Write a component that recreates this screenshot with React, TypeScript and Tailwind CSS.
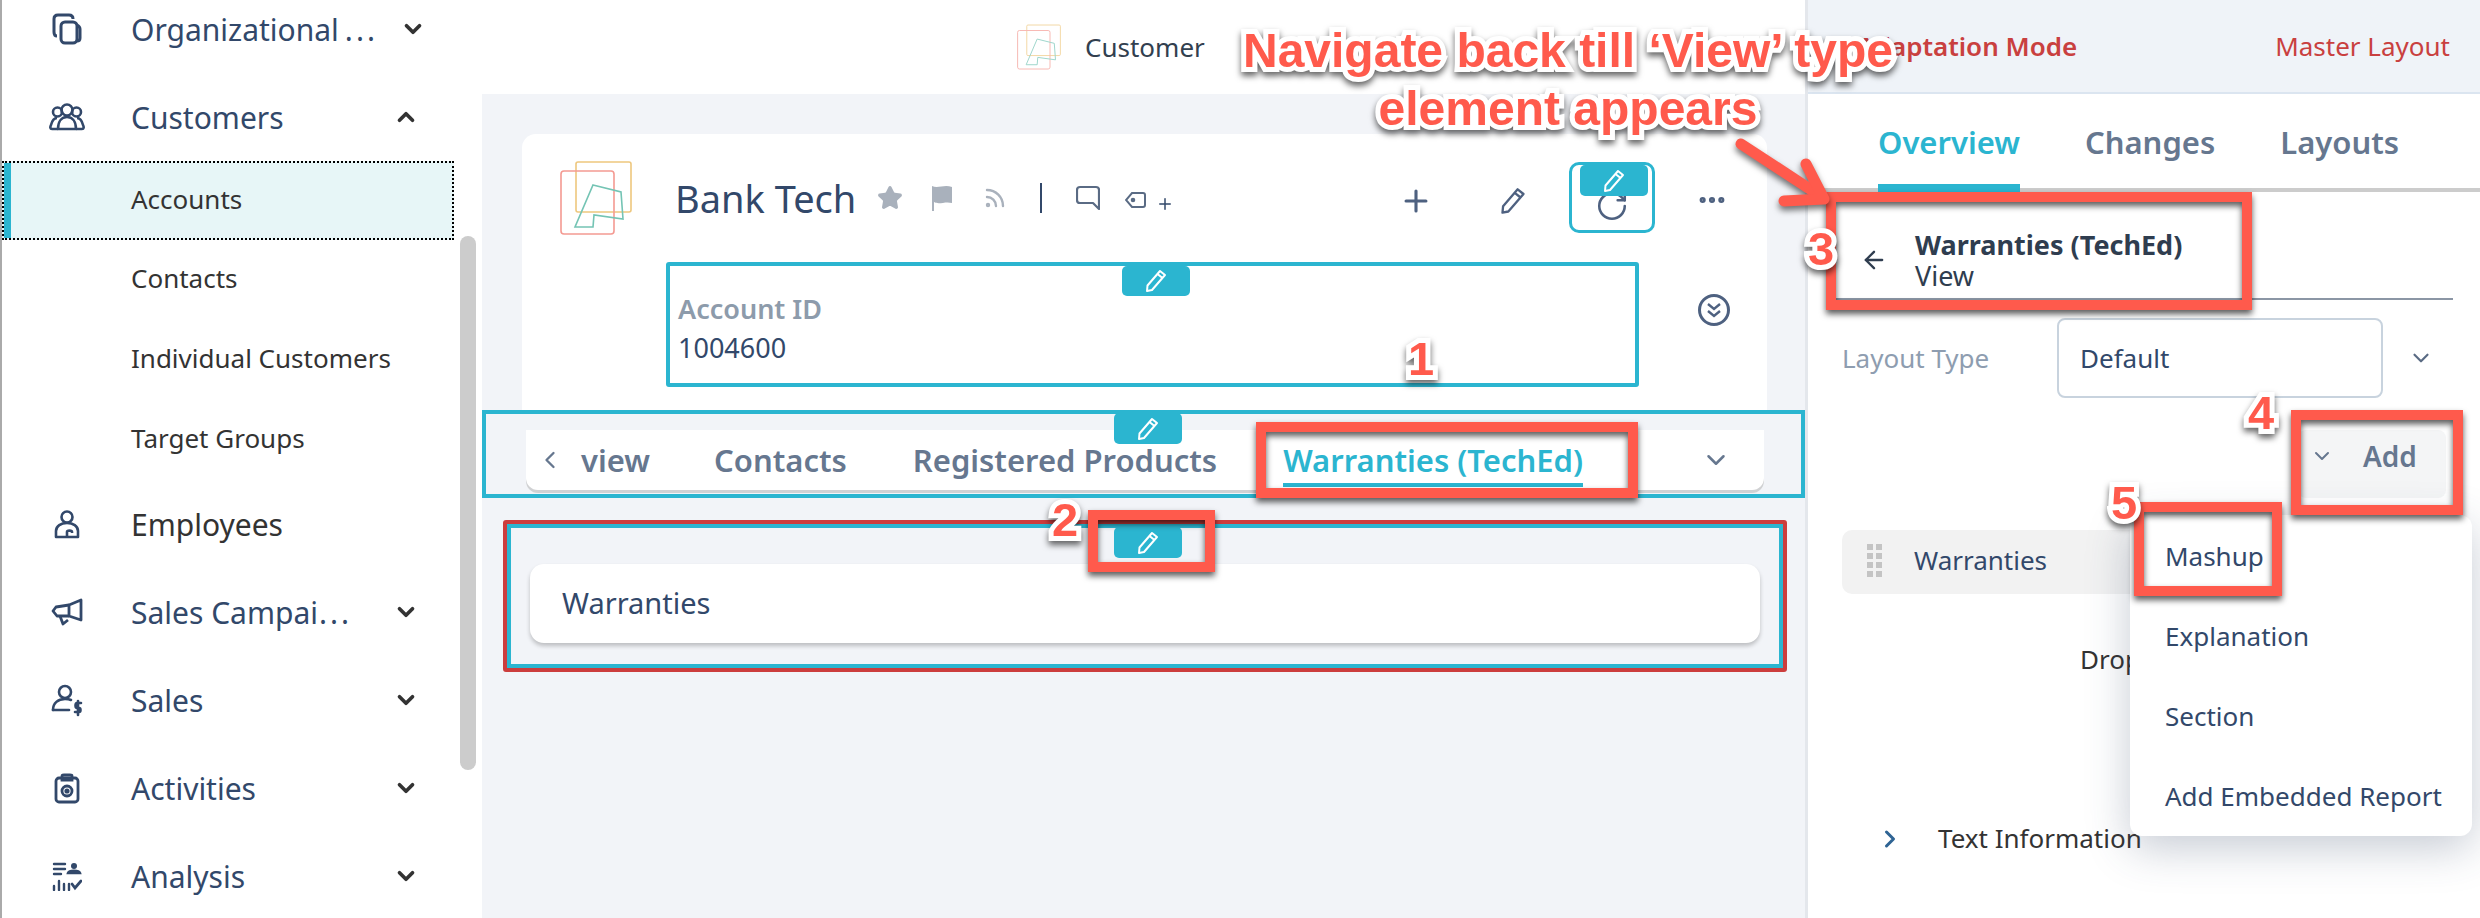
import { ArrowLeft, ChevronDown, ChevronLeft, ChevronRight, ChevronUp, MoreHorizontal, Plus, RotateCw, Rss, Star } from 'lucide-react';

const navy = '#32486a';

function OrgIcon() {
  return (
    <svg width="30" height="32" viewBox="0 0 30 32" fill="none" stroke={navy} strokeWidth="3">
      <rect x="9" y="9" width="16" height="21" rx="4" />
      <path d="M5 23 C3 23 2 21 2 19 V6 C2 3 4 2 6 2 H17 C20 2 21 4 21 6" />
      <path d="M25 12 C27 13 28 14 28 16 V25 C28 27 27 28 25 28" />
    </svg>
  );
}

function CustomersIcon() {
  return (
    <svg width="36" height="28" viewBox="0 0 36 28" fill="none" stroke={navy} strokeWidth="2.6" strokeLinejoin="round">
      <circle cx="18" cy="7" r="5.5" />
      <circle cx="8.5" cy="9" r="4.5" />
      <circle cx="27.5" cy="9" r="4.5" />
      <path d="M9 26 C9 18 13 14 18 14 C23 14 27 18 27 26 Z" />
      <path d="M9 26 H3 C1 26 1 24 2 22 C3 18 5 15 8 15" />
      <path d="M27 26 H33 C35 26 35 24 34 22 C33 18 31 15 28 15" />
    </svg>
  );
}

function EmployeesIcon() {
  return (
    <svg width="26" height="29" viewBox="0 0 26 29" fill="none" stroke={navy} strokeWidth="2.6" strokeLinejoin="round">
      <circle cx="13" cy="7" r="5.5" />
      <path d="M2 27 V21 C2 16 7 13 13 13 C19 13 24 16 24 21 V27 Z" />
      <path d="M13 27 V22 C13 20 18 20 18 22 V23" />
    </svg>
  );
}

function CampaignIcon() {
  return (
    <svg width="32" height="28" viewBox="0 0 32 28" fill="none" stroke={navy} strokeWidth="2.8" strokeLinejoin="round">
      <path d="M30 2 V22 L18 18 V7 Z" />
      <path d="M18 7 L5 9 L2 13 L6 18 L18 18" />
      <path d="M9 18 L12 26 L17 22" />
    </svg>
  );
}

function SalesIcon() {
  return (
    <svg width="32" height="33" viewBox="0 0 32 33" fill="none" stroke={navy} strokeWidth="2.6" strokeLinejoin="round" strokeLinecap="round">
      <circle cx="14" cy="8" r="6" />
      <path d="M2 26 C2 19 7 15 14 15 C16 15 18 15 20 16" />
      <path d="M2 26 H18" />
      <path d="M30 19 H26 C24 19 24 24 26 24 H28 C30 24 30 28 28 28 H24" />
      <path d="M27 17 V31" />
    </svg>
  );
}

function ActivitiesIcon() {
  return (
    <svg width="26" height="31" viewBox="0 0 26 31" fill="none" stroke={navy} strokeWidth="2.8">
      <rect x="2" y="5" width="22" height="24" rx="3" />
      <path d="M8 5 V3 C8 2 9 2 10 2 H16 C17 2 18 2 18 3 V7 H8 Z" />
      <circle cx="13" cy="18" r="5" />
      <circle cx="13" cy="18" r="1.2" fill={navy} />
    </svg>
  );
}

function AnalysisIcon() {
  return (
    <svg width="30" height="29" viewBox="0 0 30 29" fill="none" stroke={navy} strokeWidth="2.4" strokeLinecap="round">
      <path d="M2 2 H13 M2 7 H13 M2 12 H9" />
      <circle cx="22" cy="4" r="3" fill={navy} stroke="none" />
      <path d="M16 11 C17 8 27 8 28 11 Z" fill={navy} />
      <path d="M2 24 V28 M7 19 V28 M12 22 V28 M17 22 V28" />
      <path d="M20 22 L23 26 L29 19" strokeWidth="2.8" />
    </svg>
  );
}

function Logo({ className }: { className: string }) {
  return (
    <svg className={className} viewBox="0 0 72 74" fill="none" strokeWidth="1.6">
      <rect x="16" y="1" width="55" height="50" rx="2" stroke="#eec77e" />
      <rect x="1" y="10" width="53" height="63" rx="3" stroke="#f49a92" />
      <path d="M33 24 L61 31 L63 58 L34 54 L33 66 L15 66 Z" stroke="#74c4b4" />
    </svg>
  );
}

function PencilIcon({ className }: { className: string }) {
  return (
    <svg className={className} viewBox="0 0 24 24" fill="none" stroke="currentColor" strokeWidth="2" strokeLinejoin="round">
      <path d="M16 2 L21 6 L8 21 L3 22 L3.5 16.5 Z" />
      <path d="M13.5 5 L18.5 9" />
    </svg>
  );
}

function EditTab({ className }: { className: string }) {
  return (
    <div className={`absolute flex items-center justify-center rounded-[5px] bg-[#2bb5d0] text-white ${className}`}>
      <PencilIcon className="h-[24px] w-[24px]" />
    </div>
  );
}

function Box({ className }: { className: string }) {
  return <div className={`absolute z-30 border-[10px] border-[#ff5a4c] [filter:drop-shadow(0_4px_3px_rgba(0,0,0,0.65))] ${className}`} />;
}

function Num({ n, className }: { n: string; className: string }) {
  return (
    <div className={`absolute z-40 font-['Liberation_Sans',sans-serif] text-[47px] leading-[46px] font-bold text-[#ff5a4c] [-webkit-text-stroke:10px_white] [paint-order:stroke_fill] [filter:drop-shadow(0_4px_3px_rgba(0,0,0,0.6))] ${className}`}>
      {n}
    </div>
  );
}

function NavRow({ icon, label, dots, open, dark, far }: { icon: React.ReactNode; label: string; dots?: boolean; open?: boolean; dark?: boolean; far?: boolean }) {
  return (
    <div className={`flex h-[88px] items-center pl-[46px] ${far ? 'pr-[56px]' : 'pr-[63px]'}`}>
      <div className="flex w-[37px] justify-center">{icon}</div>
      <span className={`ml-[46px] text-[30px] ${dark ? 'text-[#333]' : 'text-[#32486a]'}`}>
        {label}
        {dots ? <span className={far ? 'ml-[6px] tracking-[3px]' : 'ml-[1px] tracking-[3px]'}>...</span> : null}
      </span>
      {open === undefined ? null : open ? (
        <ChevronUp className="ml-auto text-[#333]" size={26} strokeWidth={3.4} />
      ) : (
        <ChevronDown className="ml-auto text-[#333]" size={26} strokeWidth={3.4} />
      )}
    </div>
  );
}

function SubRow({ label }: { label: string }) {
  return <div className="flex h-[80px] items-center pb-[3px] pl-[129px] text-[26px] text-[#333]">{label}</div>;
}

function Sidebar() {
  return (
    <aside className="relative h-full w-[482px] shrink-0 border-l-2 border-[#aaa] bg-white">
      <div className="-mt-[15px]">
        <NavRow icon={<OrgIcon />} label="Organizational" dots open={false} far />
        <NavRow icon={<CustomersIcon />} label="Customers" open />
        <div className="flex h-[79px] w-[452px] items-center border-2 border-dotted border-black bg-[#e7f6f7] text-[26px] text-[#333]">
          <div className="h-full w-[7px] bg-[#2bb5d0]" />
          <span className="mb-[3px] ml-[120px]">Accounts</span>
        </div>
        <SubRow label="Contacts" />
        <SubRow label="Individual Customers" />
        <SubRow label="Target Groups" />
        <NavRow icon={<EmployeesIcon />} label="Employees" dark />
        <NavRow icon={<CampaignIcon />} label="Sales Campai" dots open={false} />
        <NavRow icon={<SalesIcon />} label="Sales" open={false} />
        <NavRow icon={<ActivitiesIcon />} label="Activities" open={false} />
        <NavRow icon={<AnalysisIcon />} label="Analysis" open={false} />
      </div>
      <div className="absolute top-[236px] left-[458px] h-[534px] w-[16px] rounded-[8px] bg-[#ccc]" />
    </aside>
  );
}

function Center() {
  return (
    <main className="flex h-full w-[1323px] shrink-0 flex-col bg-[#f2f4f8]">
      <div className="flex h-[94px] shrink-0 items-center bg-white pl-[535px]">
        <Logo className="h-[46px] w-[44px] opacity-70" />
        <span className="ml-[24px] text-[26px] text-[#32404f]">Customer</span>
      </div>

      <section className="relative mt-[40px] mr-[38px] ml-[40px] h-[276px] shrink-0 rounded-t-[14px] bg-white">
        <div className="flex h-[128px] items-center pl-[38px]">
          <Logo className="h-[74px] w-[72px]" />
          <h1 className="ml-[43px] text-[38px] text-[#32486a]">Bank Tech</h1>
          <Star className="ml-[21px] text-[#a9b1bc]" size={26} fill="#a9b1bc" />
          <svg className="ml-[28px]" width="22" height="28" viewBox="0 0 22 28" fill="#a9b1bc">
            <path d="M1 2 C7 5 13 0 21 3 V19 C14 17 8 21 3 18 V27 H1 Z" />
          </svg>
          <Rss className="ml-[30px] text-[#a9b1bc]" size={24} strokeWidth={2.4} />
          <div className="ml-[33px] h-[30px] w-[2px] bg-[#32486a]" />
          <svg className="ml-[34px]" width="24" height="26" viewBox="0 0 24 26" fill="none" stroke="#5a6b84" strokeWidth="2.2" strokeLinejoin="round">
            <path d="M4 2 H20 C22 2 23 3 23 5 V24 L17 18 H4 C2 18 1 17 1 15 V5 C1 3 2 2 4 2 Z" />
          </svg>
          <svg className="mt-[4px] ml-[25px]" width="21" height="16" viewBox="0 0 21 16" fill="none" stroke="#5a6b84" strokeWidth="2">
            <path d="M7 1 H18 C19 1 20 2 20 3 V13 C20 14 19 15 18 15 H7 L1 8 Z" />
            <circle cx="8" cy="8" r="1.3" fill="#5a6b84" />
          </svg>
          <Plus className="mt-[12px] ml-[10px] text-[#32486a]" size={18} />
          <Plus className="absolute top-[50px] left-[877px] text-[#4e6180]" size={34} strokeWidth={2.2} />
          <PencilIcon className="absolute top-[53px] left-[977px] h-[28px] w-[28px] text-[#4e6180]" />
          <div className="absolute top-[28px] left-[1047px] flex h-[71px] w-[86px] items-center justify-center rounded-[10px] border-[3px] border-[#2bb5d0]">
            <RotateCw className="mt-[16px] text-[#4e6180]" size={34} strokeWidth={1.8} />
          </div>
          <EditTab className="top-[31px] left-[1058px] h-[31px] w-[68px]" />
          <MoreHorizontal className="absolute top-[50px] left-[1174px] text-[#4e6180]" size={32} strokeWidth={2.6} />
        </div>

        <div className="relative ml-[144px] flex h-[125px] w-[973px] flex-col justify-center rounded-[3px] border-[4px] border-[#2bb5d0] pt-[7px] pl-[8px]">
          <span className="text-[27px] leading-[39px] font-semibold text-[#8d9bab]">Account ID</span>
          <span className="text-[27px] leading-[39px] text-[#32486a]">1004600</span>
          <EditTab className="top-[0px] left-[452px] h-[30px] w-[68px]" />
        </div>
        <div className="absolute top-[160px] left-[1176px] flex h-[32px] w-[32px] items-center justify-center rounded-full border-[3px] border-[#4e6180] text-[#4e6180]">
          <svg width="18" height="18" viewBox="0 0 18 18" fill="none" stroke="currentColor" strokeWidth="2.4">
            <path d="M3 3 L9 8 L15 3 M3 10 L9 15 L15 10" />
          </svg>
        </div>
      </section>

      <section className="relative h-[88px] shrink-0 border-[4px] border-[#2bb5d0] pt-[16px] pl-[40px]">
        <div className="flex h-[60px] w-[1238px] items-center rounded-b-[12px] bg-white text-[31px] font-semibold text-[#66778f] shadow-[0_3px_0_#d0d1d3]">
          <ChevronLeft className="ml-[10px]" size={28} strokeWidth={2} />
          <span className="ml-[17px]">view</span>
          <span className="ml-[64px]">Contacts</span>
          <span className="ml-[66px]">Registered Products</span>
          <span className="relative ml-[66px] text-[#2bb5d0]">
            Warranties (TechEd)
            <span className="absolute top-[46px] right-0 left-0 h-[4px] bg-[#2bb5d0]" />
          </span>
          <ChevronDown className="ml-[118px]" size={30} strokeWidth={2} />
        </div>
        <EditTab className="-top-px left-[628px] h-[31px] w-[68px]" />
      </section>

      <section className="relative mt-[22px] mr-[18px] ml-[21px] h-[152px] shrink-0 rounded-[3px] border-[4px] border-[#cc3d3d]">
        <div className="h-full border-[4px] border-[#2bb5d0] pt-[36px] pl-[19px]">
          <div className="flex h-[79px] w-[1230px] items-center rounded-[14px] bg-white pb-[2px] pl-[32px] text-[29px] text-[#32486a] shadow-[0_3px_4px_rgba(0,0,0,0.22)]">
            Warranties
          </div>
        </div>
        <EditTab className="top-[3px] left-[607px] h-[31px] w-[68px]" />
      </section>
    </main>
  );
}

function Panel() {
  return (
    <aside className="relative flex h-full w-[675px] shrink-0 flex-col border-l-[3px] border-[#e4e7ec] bg-white">
      <div className="flex h-[94px] shrink-0 items-center justify-end gap-[198px] border-b-2 border-[#dbe5f0] bg-[#eff3f8] pr-[30px] text-[26px] text-[#c9403f]">
        <span className="font-semibold">Adaptation Mode</span>
        <span>Master Layout</span>
      </div>
      <div className="flex h-[98px] shrink-0 items-end gap-[65px] border-b-[4px] border-[#ccc] pl-[70px] text-[31px] font-semibold text-[#66778f]">
        <span className="relative pb-[23px] text-[#2bb5d0]">
          Overview
          <span className="absolute right-0 -bottom-[4px] left-0 h-[8px] bg-[#2bb5d0]" />
        </span>
        <span className="pb-[23px]">Changes</span>
        <span className="pb-[23px]">Layouts</span>
      </div>
      <div className="mr-[27px] ml-[22px] flex h-[108px] shrink-0 items-center border-b-2 border-[#8b96a5] pt-[29px] pl-[30px] text-[#2f3d4f]">
        <ArrowLeft size={28} strokeWidth={2} />
        <div className="ml-[27px] flex flex-col">
          <span className="text-[27px] leading-[31px] font-bold">Warranties (TechEd)</span>
          <span className="text-[27px] leading-[31px]">View</span>
        </div>
      </div>
      <div className="mt-[18px] flex h-[80px] shrink-0 items-center pl-[34px]">
        <span className="w-[213px] text-[26px] text-[#8e9db0]">Layout Type</span>
        <div className="ml-[2px] flex h-[80px] w-[326px] items-center rounded-[8px] border-2 border-[#c8d3de] pl-[21px] text-[26px] text-[#32486a]">Default</div>
        <ChevronDown className="ml-[25px] text-[#5a6b84]" size={26} strokeWidth={2} />
      </div>
      <div className="mt-[32px] flex h-[68px] shrink-0 justify-end pr-[34px]">
        <div className="flex w-[148px] items-center rounded-[8px] bg-[#f4f5f6] pb-[16px] pl-[12px] text-[28px] font-semibold text-[#66778f]">
          <ChevronDown size={24} strokeWidth={2} />
          <span className="ml-[29px]">Add</span>
        </div>
      </div>
      <div className="mt-[32px] mr-[30px] ml-[34px] flex h-[64px] shrink-0 items-center rounded-[10px] bg-[#f2f2f2] pb-[3px] pl-[25px] text-[26px] text-[#32486a]">
        <svg width="15" height="34" viewBox="0 0 15 34" fill="#c4c4c4">
          <rect x="0" y="0" width="6" height="6" />
          <rect x="9" y="0" width="6" height="6" />
          <rect x="0" y="9" width="6" height="6" />
          <rect x="9" y="9" width="6" height="6" />
          <rect x="0" y="18" width="6" height="6" />
          <rect x="9" y="18" width="6" height="6" />
          <rect x="0" y="27" width="6" height="6" />
          <rect x="9" y="27" width="6" height="6" />
        </svg>
        <span className="ml-[32px]">Warranties</span>
      </div>
      <div className="mt-[46px] pl-[272px] text-[26px] text-[#333]">Drop</div>
      <div className="mt-[140px] flex items-center pl-[68px] text-[26px] text-[#333]">
        <ChevronRight className="text-[#2f6494]" size={28} strokeWidth={2.6} />
        <span className="ml-[34px]">Text Information</span>
      </div>

      <div className="absolute top-[515px] left-[322px] z-20 flex h-[321px] w-[342px] flex-col rounded-[12px] bg-white pt-[1px] pl-[35px] text-[26px] text-[#32486a] shadow-[0_12px_44px_rgba(50,70,100,0.28)]">
        <div className="flex h-[80px] items-center">Mashup</div>
        <div className="flex h-[80px] items-center">Explanation</div>
        <div className="flex h-[80px] items-center">Section</div>
        <div className="flex h-[80px] items-center">Add Embedded Report</div>
      </div>
    </aside>
  );
}

export default function App() {
  return (
    <div className="relative flex h-[918px] w-[2480px] overflow-hidden bg-white font-['Noto_Sans',sans-serif]">
      <Sidebar />
      <Center />
      <Panel />

      <Box className="top-[422px] left-[1256px] h-[76px] w-[382px]" />
      <Box className="top-[510px] left-[1088px] h-[62px] w-[127px]" />
      <Box className="top-[192px] left-[1826px] h-[118px] w-[426px]" />
      <Box className="top-[410px] left-[2291px] h-[105px] w-[172px]" />
      <Box className="top-[502px] left-[2134px] h-[94px] w-[148px]" />

      <Num n="1" className="top-[336px] left-[1408px]" />
      <Num n="2" className="top-[497px] left-[1052px]" />
      <Num n="3" className="top-[226px] left-[1808px]" />
      <Num n="4" className="top-[390px] left-[2248px]" />
      <Num n="5" className="top-[480px] left-[2111px]" />

      <div className="absolute top-[22px] left-[1238px] z-40 w-[660px] text-center font-['Liberation_Sans',sans-serif] text-[48px] leading-[58px] font-bold text-[#ff5a4c] [-webkit-text-stroke:10px_white] [paint-order:stroke_fill] [filter:drop-shadow(0_4px_3px_rgba(0,0,0,0.6))]">
        <div>Navigate back till ‘View’ type</div>
        <div>element appears</div>
      </div>

      <svg className="absolute top-[135px] left-[1730px] z-30 [filter:drop-shadow(0_4px_3px_rgba(0,0,0,0.55))]" width="110" height="80" viewBox="0 0 110 80" fill="none" stroke="#ff5a4c" strokeWidth="11" strokeLinecap="round" strokeLinejoin="round">
        <path d="M11 9 L92 62" />
        <path d="M76 29 L94 64 L54 66" />
      </svg>
    </div>
  );
}
